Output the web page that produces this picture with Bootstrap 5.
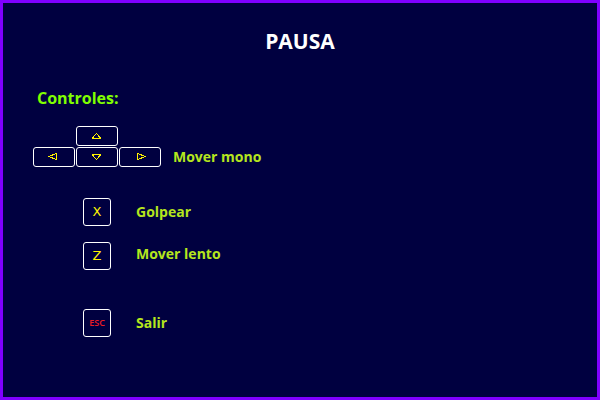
<!DOCTYPE html>
<html lang="es">
<head>
<meta charset="utf-8">
<meta name="viewport" content="width=device-width, initial-scale=1">
<title>Pausa</title>
<link href="https://cdn.jsdelivr.net/npm/bootstrap@5.3.0/dist/css/bootstrap.min.css" rel="stylesheet">
<style>
body { background: #000040; font-family: "Open Sans", "Noto Sans", sans-serif; font-weight: 700; }
.pause-screen { border: 3px solid #8000ff; padding: 24px 30px; }
.title { font-size: 21px; line-height: 28px; color: #fff; font-weight: 700; }
.heading { font-size: 16px; line-height: 24px; color: #80ff00; font-weight: 700; padding: 0 4px; margin: 31px 0 16px; }
.label-text { font-size: 14px; line-height: 20px; color: #b5e61d; }
.label-tall { line-height: 24px; }
.arrow-pad { display: grid; grid-template-columns: repeat(3, 42px); gap: 1px; }
.keycap { border: 1px solid #fff; border-radius: 3px; height: 20px; display: flex; align-items: center; justify-content: center; }
.keycap svg { display: block; fill: none; stroke: #fff200; stroke-width: 1; shape-rendering: crispEdges; }
.key-up { grid-column: 2; }
.key-left { grid-column: 1; }
.keycap-square { width: 28px; height: 28px; margin-left: 50px; color: #fff200; font: 400 13px/16px "DejaVu Sans", sans-serif; }
.keycap-esc { color: #ed1c24; font: 600 9px/12px "Open Sans", sans-serif; }
.row-arrows { gap: 12px; margin-bottom: 31px; }
.row-action { gap: 25px; margin-bottom: 16px; }
.row-exit { margin: 39px 0 0; }
</style>
</head>
<body>
<main class="pause-screen min-vh-100">
  <h1 class="title text-center mb-0">PAUSA</h1>
  <h2 class="heading">Controles:</h2>
  <div class="row-arrows d-flex align-items-end">
    <div class="arrow-pad">
      <kbd class="keycap key-up bg-transparent p-0"><svg width="10" height="6" viewBox="0 0 10 6" role="img" aria-label="Arriba"><path d="M0 5.500H9M0.500 5L4.500 0.500L8.500 5"/></svg></kbd>
      <kbd class="keycap key-left bg-transparent p-0"><svg width="12" height="8" viewBox="0 0 12 8" role="img" aria-label="Izquierda"><path d="M8.500 0V7M8.500 0.500L0.500 3.500L8.500 6.500"/></svg></kbd>
      <kbd class="keycap bg-transparent p-0"><svg width="10" height="6" viewBox="0 0 10 6" role="img" aria-label="Abajo"><path d="M0 0.500H9M0.500 1L4.500 5.500L8.500 1"/></svg></kbd>
      <kbd class="keycap bg-transparent p-0"><svg width="12" height="8" viewBox="0 0 12 8" role="img" aria-label="Derecha"><path d="M3.500 0V7M3.500 0.500L11.500 3.500L3.500 6.500"/></svg></kbd>
    </div>
    <span class="label-text">Mover mono</span>
  </div>
  <div class="row-action d-flex align-items-center">
    <kbd class="keycap keycap-square bg-transparent p-0">X</kbd>
    <span class="label-text">Golpear</span>
  </div>
  <div class="row-action d-flex align-items-start">
    <kbd class="keycap keycap-square bg-transparent p-0">Z</kbd>
    <span class="label-text label-tall">Mover lento</span>
  </div>
  <div class="row-action row-exit d-flex align-items-center">
    <kbd class="keycap keycap-square keycap-esc bg-transparent p-0">ESC</kbd>
    <span class="label-text">Salir</span>
  </div>
</main>
<script src="https://cdn.jsdelivr.net/npm/bootstrap@5.3.0/dist/js/bootstrap.bundle.min.js"></script>
</body>
</html>
